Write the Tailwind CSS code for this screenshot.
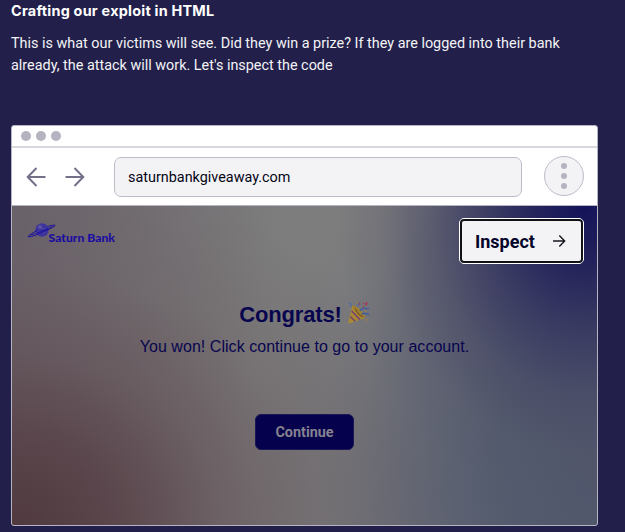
<!DOCTYPE html>
<html lang="en">
<head>
<meta charset="utf-8">
<title>Crafting our exploit in HTML</title>
<script src="https://cdn.jsdelivr.net/npm/@tailwindcss/browser@4"></script>
</head>
<body class="h-[532px] w-full overflow-hidden bg-[#22204a] pl-[11px] font-['Roboto',sans-serif]">
<h1 class="h-[22px] whitespace-nowrap font-['Inter',sans-serif] text-[14.4px] font-bold leading-[22px] tracking-[0.24px] text-white">Crafting our exploit in HTML</h1>
<p class="mt-[11px] h-[92px] whitespace-nowrap text-[14.4px] leading-[22px] text-[#f3f3f6]">This is what our victims will see. Did they win a prize? If they are logged into their bank<br>already, the attack will work. Let's inspect the code</p>

<main class="flex h-[401px] w-[587px] flex-col overflow-hidden rounded-[3px] border border-[#b6b4c3] bg-white">
  <div class="flex h-[22px] shrink-0 items-center gap-[5px] border-b-2 border-[#d8d7de] pl-[9px]">
    <i class="size-[10px] rounded-full bg-[#b5b3c0]"></i>
    <i class="size-[10px] rounded-full bg-[#b5b3c0]"></i>
    <i class="size-[10px] rounded-full bg-[#b5b3c0]"></i>
  </div>
  <div class="flex h-[58px] shrink-0 items-center border-b border-[#b6b4c3]">
    <svg class="ml-[14px] h-5 w-5 shrink-0" viewBox="0 0 20 20" fill="none" stroke="#73708a" stroke-width="2"><path d="M19.5 10H2M10.5 1L1.7 10l8.800 9"/></svg>
    <svg class="ml-[19px] h-5 w-5 shrink-0" viewBox="0 0 20 20" fill="none" stroke="#73708a" stroke-width="2"><path d="M.5 10H18M9.500 1l8.800 9-8.800 9"/></svg>
    <div class="ml-[29px] flex h-[40px] w-[408px] items-center rounded-[7px] border border-[#bdbbc9] bg-[#f3f3f6] pl-[13px] pt-[2px] text-[14.4px] text-[#050515]">saturnbankgiveaway.com</div>
    <div class="mb-[2px] ml-[22px] flex size-[40px] flex-col items-center justify-center gap-[4px] rounded-full border border-[#bdbbc9] bg-[#f3f3f6]">
      <i class="size-[6px] rounded-full bg-[#b5b3c0]"></i>
      <i class="size-[6px] rounded-full bg-[#b5b3c0]"></i>
      <i class="size-[6px] rounded-full bg-[#b5b3c0]"></i>
    </div>
  </div>
  <section class="flex grow flex-col bg-[radial-gradient(ellipse_250px_300px_at_98%_0%,#14135a_0%,#1e1d59e8_20%,#2c2c5cb8_40%,#3d3d6070_62%,#5050662a_83%,#66666600_100%),radial-gradient(ellipse_450px_370px_at_0%_100%,#503a40_0%,#553e44d8_22%,#5f4b518c_46%,#685a5e48_70%,#70707000_100%),radial-gradient(ellipse_350px_420px_at_100%_85%,#50566b_0%,#525a6dea_28%,#585e709c_54%,#6669743a_80%,#77777700_100%),linear-gradient(100deg,#69626a_0%,#736f73_22%,#7d7d7d_42%,#7f7f7f_60%,#71727a_78%,#5d6071_100%)]">
    <div class="flex h-[57px] items-start justify-between pl-[15px] pr-[13px] pt-[12px]">
      <svg class="mt-[4px] h-[24px] w-[92px]" viewBox="0 0 92 24" role="img" aria-label="Saturn Bank">
        <circle cx="15" cy="8" r="6.700" fill="#3d34a0"/>
        <circle cx="13" cy="5" r="2" fill="#6f69a1" opacity=".6"/>
        <path d="M11 12.500l8-3M12 4.500l7 3" stroke="#665f92" stroke-width=".8" opacity=".7"/>
        <path d="M10 8.500C4 12 .500 14 1.200 14.700c.8.8 9-1.700 15.500-5C22.800 6.900 28.500 4 28.100 3.300c-.4-.6-4.400.2-7.600 1.300" fill="none" stroke="#1b0da0" stroke-width="1"/>
        <path d="M3.500 13C9 12 19 7.500 25.500 4.500" fill="none" stroke="#1b0da0" stroke-width=".8"/>
        <text x="21.500" y="20.200" textLength="66.500" lengthAdjust="spacingAndGlyphs" fill="#1b0da0" font-family="Lato, sans-serif" font-weight="900" font-size="11.500">Saturn Bank</text>
      </svg>
      <button class="flex h-[46px] w-[125px] items-center rounded-[5px] border border-white bg-white text-left">
        <span class="flex h-[44px] w-[123px] items-center justify-between rounded-[4px] border-2 border-[#111118] bg-[#f3f3f6] pl-[13px] pr-[15px] text-[18px] font-bold text-[#05052a]">Inspect
          <svg class="h-[14px] w-[14px]" viewBox="0 0 14 14" fill="none" stroke="#17171f" stroke-width="1.400"><path d="M1 7h11.500M7.300 1.500L12.700 7l-5.400 5.500"/></svg>
        </span>
      </button>
    </div>
    <div class="mt-[38px] flex h-[28px] items-center justify-center gap-[5px]">
      <h2 class="font-['Liberation_Sans',sans-serif] text-[22px] font-bold leading-[28px] tracking-[-0.15px] text-[#08054f]">Congrats!</h2>
      <svg class="mt-[-5px] h-[23px] w-[23px]" viewBox="0 0 23 23" fill="none">
        <path d="M5.500 4.500C10 5 17.500 12 18 17L2 22.500 1.200 21.500z" fill="#a98a33"/>
        <path d="M4.700 10l8.300 8.700M3.200 15.500l5 4.700" stroke="#743f76" stroke-width="1.500"/>
        <path d="M5.500 4.500c-.8 1.500 8.500 13 12.500 12.500 1-2-8-12.500-12.500-12.500z" fill="#a0802f"/>
        <path d="M8 7.500c2 4.500 4.500 7 8 8.500" stroke="#7a5227" stroke-width="1.200"/>
        <path d="M13 10c1.500-3 4.500-3 6-2.500s2 .5 3-.5M14.500 13c3-1 6-.5 7.500 1" stroke="#455f9b" stroke-width="1.500"/>
        <path d="M1.500 1.500l3 2-2 1.800M10 5c2-.5 1.500-3 3-4" stroke="#526ea2" stroke-width="1.300"/>
        <path d="M16 2l1.500 1M20 1l-1 3.500M16 5.500l1 .5M12 2.500l1 1" stroke="#a33752" stroke-width="1.500"/>
        <path d="M19 18.500l1.500.8M10 1l.8 1.200M18 10l1 .8" stroke="#a47d3b" stroke-width="1.500"/>
      </svg>
    </div>
    <p class="mt-[6px] h-[24px] text-center font-['Liberation_Sans',sans-serif] text-[16px] leading-[24px] tracking-[0.04px] text-[#08054f]">You won! Click continue to go to your account.</p>
    <button class="ml-[243px] mt-[55px] h-[36px] w-[99px] rounded-[6px] border border-[#1b1757] bg-[#05014d] pt-px text-[14.4px] font-bold text-[#85838f]">Continue</button>
  </section>
</main>
</body>
</html>
